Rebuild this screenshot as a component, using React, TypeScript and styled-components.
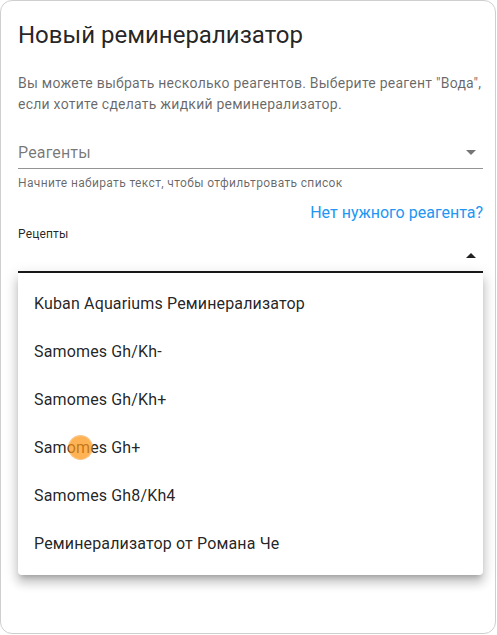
import styled, { createGlobalStyle } from 'styled-components';

const GlobalStyle = createGlobalStyle`
  html, body {
    margin: 0;
    padding: 0;
    background: #ffffff;
  }
  body {
    font-family: Roboto, 'Noto Sans', sans-serif;
    -webkit-font-smoothing: antialiased;
  }
`;

const recipes = [
  'Kuban Aquariums Реминерализатор',
  'Samomes Gh/Kh-',
  'Samomes Gh/Kh+',
  'Samomes Gh+',
  'Samomes Gh8/Kh4',
  'Реминерализатор от Романа Че',
];

const ArrowIcon = ({ up }: { up?: boolean }) => (
  <Arrow viewBox="0 0 24 24" $up={up}>
    <path d="M7 10l5 5 5-5z" />
  </Arrow>
);

const App = () => {
  return (
    <Page>
      <GlobalStyle />
      <Dialog>
        <Title>Новый реминерализатор</Title>
        <Description>
          Вы можете выбрать несколько реагентов. Выберите реагент "Вода",
          если хотите сделать жидкий реминерализатор.
        </Description>
        <Field>
          <InputRow>
            <Placeholder>Реагенты</Placeholder>
            <ArrowIcon />
          </InputRow>
          <HelperText>Начните набирать текст, чтобы отфильтровать список</HelperText>
        </Field>
        <LinkRow>
          <Link>Нет нужного реагента?</Link>
        </LinkRow>
        <Field>
          <Label>Рецепты</Label>
          <InputRow $focused>
            <Placeholder />
            <ArrowIcon up />
          </InputRow>
          <Menu>
            {recipes.map((r) => (
              <MenuItem key={r}>{r}</MenuItem>
            ))}
          </Menu>
        </Field>
      </Dialog>
      <Touch />
    </Page>
  );
};

const Page = styled.div`
  position: relative;
  width: 497px;
  height: 635px;
  box-sizing: border-box;
  padding: 0 1px 1px 0;
`;

const Dialog = styled.div`
  box-sizing: border-box;
  height: 100%;
  border: 1px solid #cfcfcf;
  border-radius: 12px;
  background: #fff;
  padding: 16px 12px 0 17px;
  display: flex;
  flex-direction: column;
`;

const Title = styled.h2`
  margin: 0;
  font-size: 24px;
  font-weight: 400;
  line-height: 36px;
  color: rgba(0, 0, 0, 0.87);
`;

const Description = styled.p`
  margin: 20px -8px 0 0;
  font-size: 14px;
  line-height: 21px;
  letter-spacing: 0.24px;
  color: rgba(0, 0, 0, 0.6);
`;

const Field = styled.div`
  position: relative;
  display: flex;
  flex-direction: column;
`;

const InputRow = styled.div<{ $focused?: boolean }>`
  display: flex;
  align-items: center;
  box-sizing: border-box;
  padding: 6px 4px 7px 0;
  margin-top: ${(p) => (p.$focused ? '1px' : '22px')};
  border-bottom: ${(p) => (p.$focused ? '2px solid #1a1a1a' : '1px solid rgba(0, 0, 0, 0.42)')};
  height: ${(p) => (p.$focused ? '31px' : '32px')};
`;

const Placeholder = styled.span`
  flex: 1;
  font-size: 16px;
  line-height: 19px;
  letter-spacing: 0.15px;
  color: rgba(0, 0, 0, 0.54);
`;

const Arrow = styled.svg<{ $up?: boolean }>`
  width: 24px;
  height: 24px;
  margin-right: -4px;
  fill: ${(p) => (p.$up ? 'rgba(0, 0, 0, 0.87)' : 'rgba(0, 0, 0, 0.54)')};
  transform: ${(p) => (p.$up ? 'rotate(180deg)' : 'none')};
`;

const HelperText = styled.p`
  margin: 4px 0 0;
  font-size: 12px;
  line-height: 20px;
  letter-spacing: 0.35px;
  color: rgba(0, 0, 0, 0.6);
`;

const LinkRow = styled.div`
  display: flex;
  justify-content: flex-end;
  margin-top: 8px;
`;

const Link = styled.a`
  font-size: 16px;
  line-height: 24px;
  letter-spacing: 0;
  color: #2196f3;
  cursor: pointer;
`;

const Label = styled.label`
  margin-top: 2px;
  font-size: 12px;
  line-height: 14px;
  letter-spacing: 0.15px;
  color: rgba(0, 0, 0, 0.87);
`;

const Menu = styled.ul`
  position: absolute;
  top: 100%;
  left: 0;
  right: 0;
  margin: 0;
  padding: 6px 0 8px;
  list-style: none;
  background: #fff;
  border-radius: 0 0 4px 4px;
  box-shadow: 0 5px 5px -3px rgba(0, 0, 0, 0.2), 0 8px 10px 1px rgba(0, 0, 0, 0.14),
    0 3px 14px 2px rgba(0, 0, 0, 0.12);
  z-index: 2;
`;

const MenuItem = styled.li`
  height: 48px;
  display: flex;
  align-items: center;
  padding: 0 16px;
  font-size: 16px;
  letter-spacing: 0.15px;
  color: rgba(0, 0, 0, 0.87);
`;

const Touch = styled.div`
  position: absolute;
  left: 69px;
  top: 436px;
  width: 23px;
  height: 23px;
  border-radius: 50%;
  background: rgba(255, 150, 20, 0.72);
  box-shadow: 0 0 0 1px rgba(240, 140, 20, 0.5);
  z-index: 3;
`;

export default App;
